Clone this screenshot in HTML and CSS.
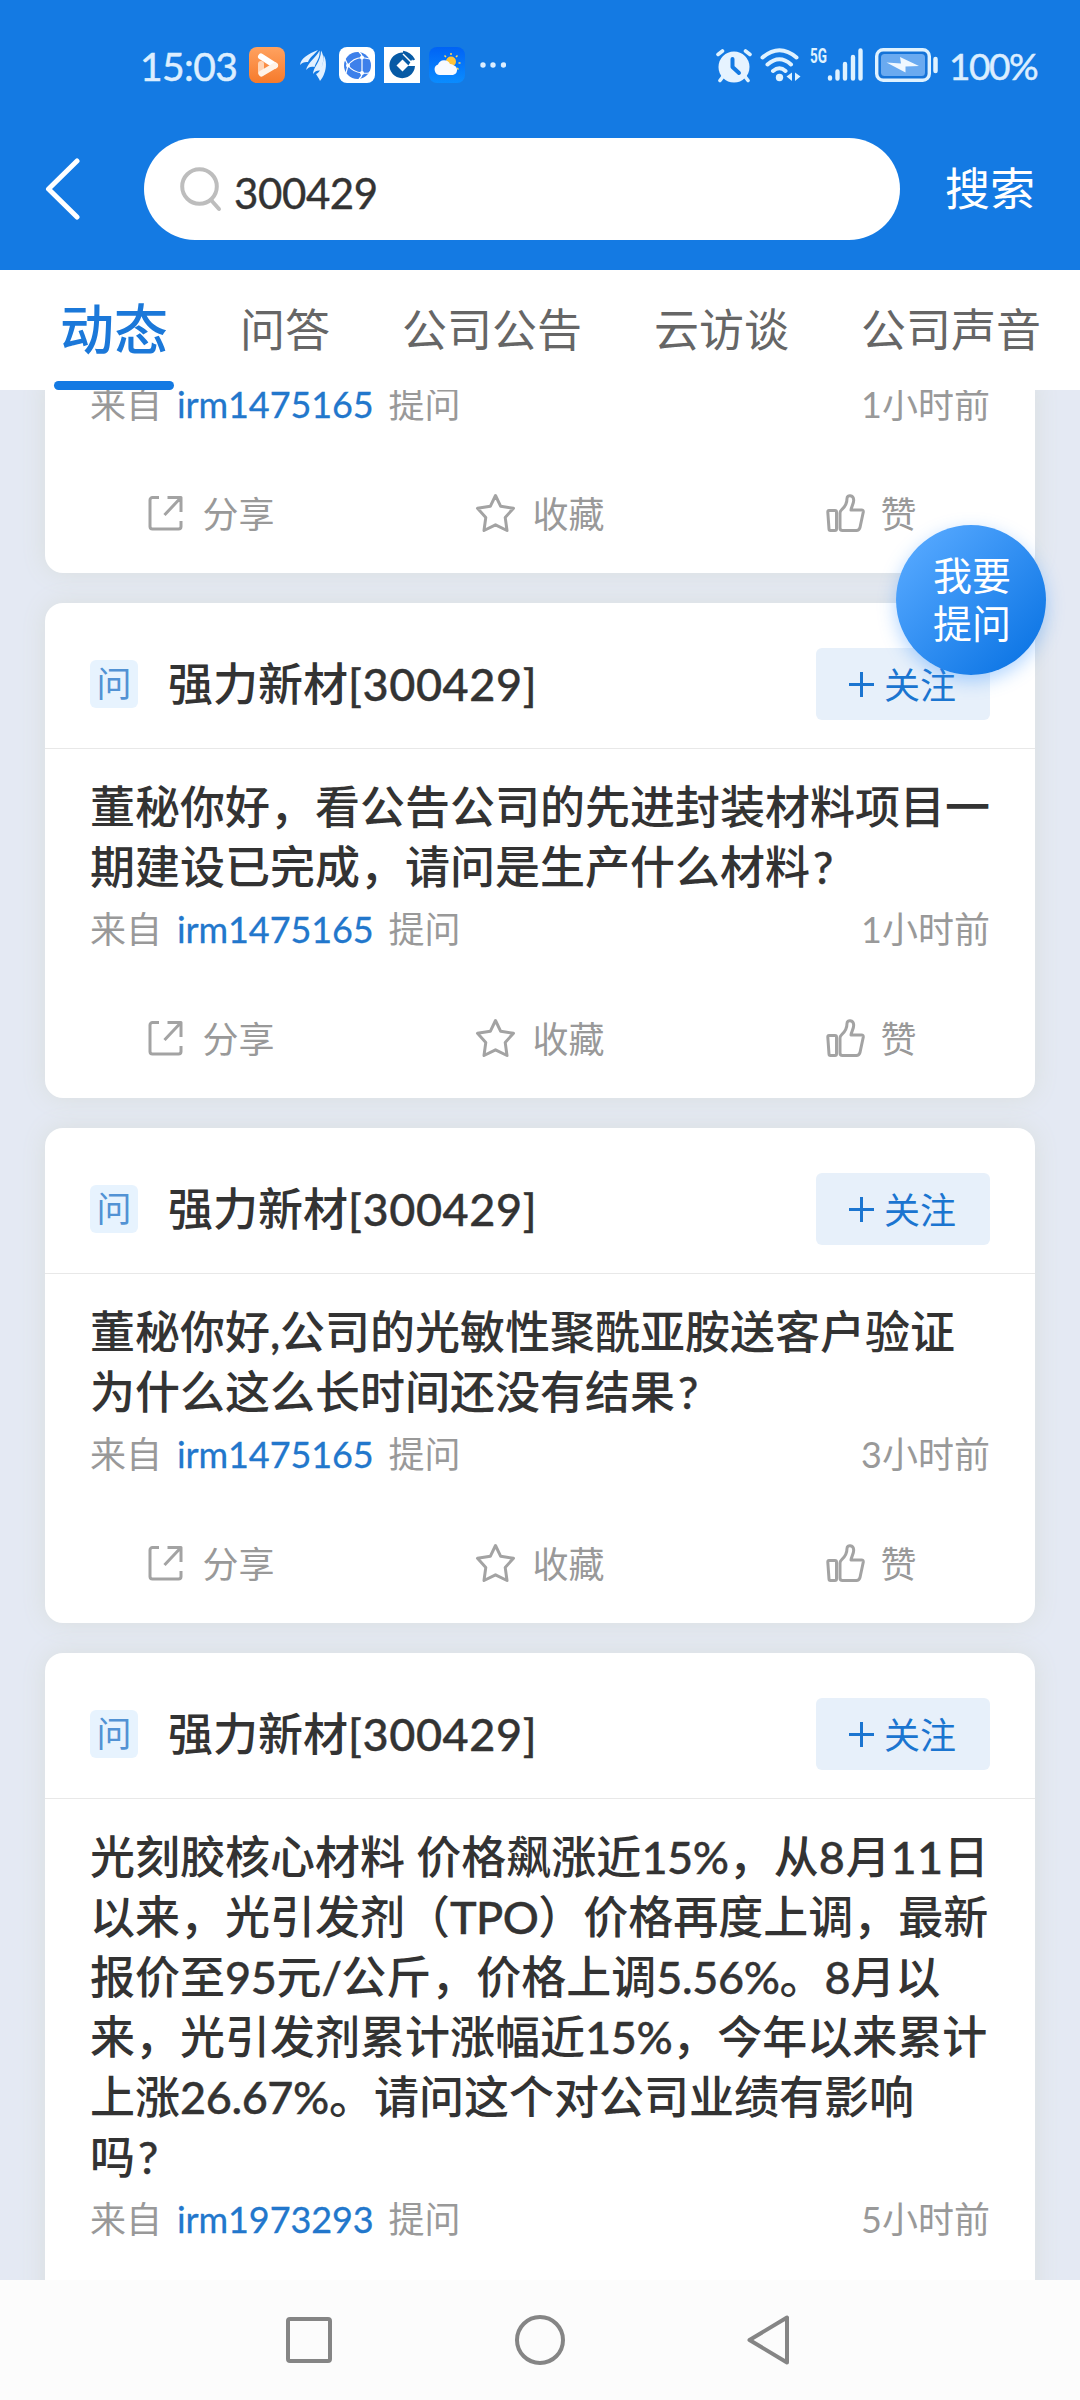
FILE: index.html
```html
<!DOCTYPE html>
<html lang="zh-CN">
<head>
<meta charset="utf-8">
<title>搜索</title>
<link rel="stylesheet" href="styles.css">
</head>
<body>
<svg class="sprite" aria-hidden="true">
  <symbol id="share" viewBox="0 0 42 42"><path d="M14 5.500H7.500a2.500 2.500 0 0 0-2.500 2.500V34.500a2.500 2.500 0 0 0 2.500 2.500H33.500a2.500 2.500 0 0 0 2.500-2.500V29M22.500 5.500H36V20M35.500 6L19.500 23"/></symbol>
  <symbol id="star" viewBox="0 0 42 42"><path d="M20.500 3.500L25.700 14.300 38.500 16.300 30.200 25.400 32 38.500 20.500 32.800 9 38.500 10.800 25.400 2.500 16.300 15.300 14.300Z"/></symbol>
  <symbol id="thumb" viewBox="0 0 42 42"><path d="M6 18.500H12Q13.500 18.500 13.500 20V37Q13.500 38.500 12 38.500H7.500Q6 38.500 6 37L4.800 20Q4.800 18.500 6 18.500ZM17 21Q17 19 18.500 17.800C22.500 14.500 24 11 24 6.500C24 2.500 30.500 2.500 30.700 8C30.800 11.500 28.500 14.500 28 18H38.500Q40.500 18 40.300 20L37 35.500Q36 38.500 33.500 38.500H19.500Q17 38.500 17 36Z"/></symbol>
</svg>
<div class="screen">
  <header class="top">
    <div class="status">
      <span class="clock">15:03</span>
      <svg class="st video" width="36" height="36" viewBox="0 0 36 36"><defs><linearGradient id="o" x2="0" y2="1"><stop stop-color="#ffa260"/><stop offset="1" stop-color="#f67a2b"/></linearGradient></defs><rect width="36" height="36" rx="8" fill="url(#o)"/><path d="M12 9.500L26 18.500" stroke="#fff" stroke-width="6" stroke-linecap="round"/><path d="M12 17V25" stroke="#ffd4b5" stroke-width="6" stroke-linecap="round"/><path d="M12.500 26.500L26 18.500" stroke="#fff3e8" stroke-width="6" stroke-linecap="round"/></svg>
      <svg class="st wing" width="27" height="31" viewBox="0 0 27 31" fill="#e3f1ff"><path d="M0 15C1 8 8 4 18 0C14 5 10 7 8 12C5 11.500 2 12.500 0 15ZM6 20C8 12 16 8 19.500 0.500C20.500 8 16 12 14.500 17C11 16 8.500 17 6 20ZM13 24C13 17 21 12 21 0.500C25 7 23 14 20.500 20.500C17.500 20 15 21 13 24ZM20 31C19 28 17 26 16 24C19 23 24 17 23.500 5C28 12 26 24 20 31Z"/></svg>
      <svg class="st globe" width="36" height="36" viewBox="0 0 36 36"><rect width="36" height="36" rx="8" fill="#fff"/><circle cx="18.500" cy="18.500" r="13.500" fill="#3e80ea"/><g fill="none" stroke="#fff" stroke-width="1.200"><path d="M20 5Q23 7 23 10.500V26Q23 30 20 32M9 18.500Q14 11 23 10.500L31 12M9 18.500Q14 25 23 26T31 24M9 18.500L6 12M9 18.500L7 26"/></g><g fill="#fff"><circle cx="23" cy="10.500" r="2"/><circle cx="9" cy="18.500" r="2"/><circle cx="23" cy="26" r="2"/></g></svg>
      <svg class="st bank" width="36" height="36" viewBox="0 0 36 36"><rect width="36" height="36" fill="#fff"/><path d="M29 11L25 7.500A12.800 12.800 0 1 0 31 19H24" fill="#075aa5"/><path d="M19 5Q26 6 30 13" fill="none" stroke="#075aa5" stroke-width="2.500"/><path d="M19 7L27 15" stroke="#fff" stroke-width="1.500"/><path d="M18.500 12.500L24.500 18.500 18.500 24.500 12.500 18.500Z" fill="#fff"/></svg>
      <svg class="st weather" width="36" height="36" viewBox="0 0 36 36"><defs><linearGradient id="w" x2="0" y2="1"><stop stop-color="#0063f5"/><stop offset="1" stop-color="#0a8cff"/></linearGradient></defs><rect width="36" height="36" rx="8" fill="url(#w)"/><path d="M22 6V8M15.500 8.500L17 10M28.500 8.500L27 10M29.500 16H31.500M28 21L29.500 22.500" stroke="#ffd65a" stroke-width="1.500"/><circle cx="22" cy="14.500" r="5" fill="#ffc43a"/><path d="M12 28A5.500 5.500 0 0 1 9 17.500A6.500 6.500 0 0 1 21 17A5 5 0 0 1 25 18.500A5 5 0 0 1 24 28Z" fill="#f7faff"/></svg>
      <svg class="st dots" width="26" height="8" viewBox="0 0 26 8" fill="#dceeff"><circle cx="3" cy="4" r="2.700"/><circle cx="13" cy="4" r="2.700"/><circle cx="23.500" cy="4" r="2.700"/></svg>
      <svg class="st alarm" width="36" height="35" viewBox="0 0 36 35"><g stroke="#dff2ff" stroke-width="3.600" stroke-linecap="round"><path d="M2 6.500L6.500 3M34 6.500L29.500 3M7 28.500L4 32.500M29 28.500L32 32.500"/></g><circle cx="18" cy="19" r="15.500" fill="#e6f3ff"/><path d="M16.500 11V19L23 25" fill="none" stroke="#147ae3" stroke-width="4" stroke-linecap="round" stroke-linejoin="round"/></svg>
      <svg class="st wifi" width="41" height="34" viewBox="0 0 41 34"><g fill="none" stroke="#dff2ff" stroke-width="4" stroke-linecap="round"><path d="M2.500 9.500Q19.500-5 36.500 9.500M7.500 16.500Q19.500 6 31 16.500M13 23Q19.500 17.500 25.500 23"/></g><circle cx="19.500" cy="29.500" r="3.700" fill="#dff2ff"/><path d="M32 24.500V33L26.500 28.500ZM35 24.500L40.500 28.500 35 33Z" fill="#dff2ff"/></svg>
      <svg class="st signal" width="54" height="34" viewBox="0 0 54 34"><text class="net" x="0" y="15" textLength="17" lengthAdjust="spacingAndGlyphs">5G</text><g stroke="#dff2ff" stroke-width="4.400" stroke-linecap="round"><path d="M20 29.500V30.500M27.500 23.500V30.500M35 16V30.500M43 9V30.500M50.500 2.500V30.500"/></g></svg>
      <svg class="st battery" width="64" height="34" viewBox="0 0 64 34"><rect x="1.700" y="1.700" width="52.600" height="30.600" rx="6.500" fill="#1573d8" stroke="#dff2ff" stroke-width="3.400"/><rect x="6" y="6" width="44" height="22" rx="3.500" fill="#6aaaf0"/><path d="M11.500 14.500L26 15.500 25 9 44 18 30.500 18.500 30.500 24.500Z" fill="#f0f8ff"/><path d="M60.500 11V23" stroke="#dff2ff" stroke-width="4.500" stroke-linecap="round"/></svg>
      <span class="percent">100%</span>
    </div>
    <div class="search-row">
      <svg class="back" width="36" height="62" viewBox="0 0 36 62"><path d="M32 3L3.500 31 32 59" fill="none" stroke="#fff" stroke-width="5" stroke-linecap="round" stroke-linejoin="round"/></svg>
      <div class="search-box">
        <svg width="44" height="46" viewBox="0 0 44 46" fill="none" stroke="#bdbdbd" stroke-width="4"><circle cx="19.500" cy="20.500" r="17.300"/><path d="M31 34L39 43" stroke-linecap="round"/></svg>
        <span>300429</span>
      </div>
      <span class="search-go">搜索</span>
    </div>
  </header>
  <nav class="tabs">
    <span class="tab active">动态</span><span class="tab">问答</span><span class="tab">公司公告</span><span class="tab">云访谈</span><span class="tab">公司声音</span>
  </nav>
  <main class="feed">
    <article class="card first">
      <div class="meta"><span>来自</span><a>irm1475165</a><span>提问</span><time>1小时前</time></div>
      <div class="actions"><span><svg><use href="#share"/></svg>分享</span><span><svg><use href="#star"/></svg>收藏</span><span><svg class="like"><use href="#thumb"/></svg>赞</span></div>
    </article>
    <article class="card">
      <div class="head"><i class="badge">问</i><h2>强力新材<span class="num wide">[300429]</span></h2><button class="follow"><b></b>关注</button></div>
      <p class="question">董秘你好，看公告公司的先进封装材料项目一<br>期建设已完成，请问是生产什么材料<span class="num mark">?</span></p>
      <div class="meta"><span>来自</span><a>irm1475165</a><span>提问</span><time>1小时前</time></div>
      <div class="actions"><span><svg><use href="#share"/></svg>分享</span><span><svg><use href="#star"/></svg>收藏</span><span><svg class="like"><use href="#thumb"/></svg>赞</span></div>
    </article>
    <article class="card">
      <div class="head"><i class="badge">问</i><h2>强力新材<span class="num wide">[300429]</span></h2><button class="follow"><b></b>关注</button></div>
      <p class="question">董秘你好<span class="num">,</span>公司的光敏性聚酰亚胺送客户验证<br>为什么这么长时间还没有结果<span class="num mark">?</span></p>
      <div class="meta"><span>来自</span><a>irm1475165</a><span>提问</span><time>3小时前</time></div>
      <div class="actions"><span><svg><use href="#share"/></svg>分享</span><span><svg><use href="#star"/></svg>收藏</span><span><svg class="like"><use href="#thumb"/></svg>赞</span></div>
    </article>
    <article class="card last">
      <div class="head"><i class="badge">问</i><h2>强力新材<span class="num wide">[300429]</span></h2><button class="follow"><b></b>关注</button></div>
      <p class="question">光刻胶核心材料 价格飙涨近<span class="num">15%</span>，从<span class="num wide">8</span>月<span class="num wide">11</span>日<br>以来，光引发剂（<span class="num tight">TPO</span>）价格再度上调，最新<br>报价至<span class="num">95</span>元<span class="num tight">/</span>公斤，价格上调<span class="num">5.56%</span>。<span class="num">8</span>月以<br>来，光引发剂累计涨幅近<span class="num">15%</span>，今年以来累计<br>上涨<span class="num">26.67%</span>。请问这个对公司业绩有影响<br>吗<span class="num mark">?</span></p>
      <div class="meta"><span>来自</span><a>irm1973293</a><span>提问</span><time>5小时前</time></div>
    </article>
  </main>
  <footer class="sysnav">
    <svg width="50" height="54" viewBox="0 0 50 54"><rect x="4" y="6" width="42" height="42" rx="2"/></svg>
    <svg width="54" height="54" viewBox="0 0 54 54"><circle cx="27" cy="27" r="23"/></svg>
    <svg width="50" height="54" viewBox="0 0 50 54"><path d="M41 4.500V49.500L3.500 27Z"/></svg>
  </footer>
  <button class="ask">我要<br>提问</button>
</div>
</body>
</html>
```
FILE: styles.css
```css
* { box-sizing: border-box; margin: 0; padding: 0; }
body {
  width: 1080px;
  font-family: Lato, "Noto Sans CJK SC", sans-serif;
  color: #333;
}
.sprite { display: none; }
svg { display: block; flex: none; }
button { border: 0; font-family: inherit; }
.screen {
  position: relative;
  display: flex;
  flex-direction: column;
  width: 1080px;
  height: 2400px;
  overflow: hidden;
  background: #e4e9f3;
}

/* status bar and search */
.top { height: 270px; background: #147ae3; flex: none; }
.status { display: flex; align-items: center; height: 130px; padding: 0 44px 0 140px; color: #dceeff; }
.clock { width: 100px; margin-right: 9px; padding-top: 2px; font-size: 39px; line-height: 50px; letter-spacing: -.6px; -webkit-text-stroke: .5px; }
.percent { width: 87px; margin-left: 10px; padding-top: 2px; font-size: 37px; line-height: 50px; letter-spacing: -1.500px; white-space: nowrap; -webkit-text-stroke: .5px; }
.wing { margin: 0 12px 0 15px; }
.bank { margin: 0 9px; }
.dots { margin-left: 15px; }
.alarm { margin-left: auto; }
.wifi { margin: 0 9px 0 8px; }
.signal { margin-right: 11px; overflow: visible; }
.net { font: bold 20px/24px Roboto, sans-serif; fill: #dff2ff; }
.search-row { display: flex; align-items: center; height: 118px; padding-left: 45px; }
.search-box {
  display: flex;
  align-items: center;
  gap: 10px;
  width: 756px;
  height: 102px;
  margin-left: 63px;
  padding-left: 36px;
  border-radius: 51px;
  background: #fff;
  font-size: 42px;
}
.search-box span { padding-top: 8px; letter-spacing: -.4px; -webkit-text-stroke: .4px; }
.search-go { margin-left: 45px; font-size: 45px; line-height: 60px; color: #fff; }

/* tabs */
.tabs {
  position: relative;
  z-index: 1;
  display: flex;
  align-items: center;
  gap: 72px;
  flex: none;
  height: 120px;
  padding-left: 60px;
  background: #fff;
  font-size: 45px;
  line-height: 120px;
  color: #666;
  white-space: nowrap;
}
.active { position: relative; font-size: 54px; font-weight: 500; color: #1b78d9; }
.active::after {
  content: "";
  position: absolute;
  left: -6px;
  right: -6px;
  bottom: 0;
  height: 9px;
  border-radius: 5px;
  background: #147ae3;
}

/* feed */
.feed { flex: 1; min-height: 0; overflow: hidden; padding: 0 45px; display: flex; flex-direction: column; gap: 30px; }
.card { flex: none; border-radius: 18px; background: #fff; box-shadow: 0 0 24px #d9dedd; }
.first { margin-top: -10px; border-radius: 0 0 18px 18px; }
.last { height: 700px; }
.head { display: flex; align-items: center; height: 146px; padding: 17px 45px 0; border-bottom: 1px solid #e8e8e8; }
.badge {
  width: 48px;
  height: 48px;
  border-radius: 6px;
  background: #e7f3fe;
  color: #5292d4;
  font-size: 35px;
  font-style: normal;
  line-height: 46px;
  text-align: center;
}
.head h2 { margin-left: 30px; font-size: 45px; font-weight: 500; line-height: 60px; }
.num { letter-spacing: -.4px; -webkit-text-stroke: .4px; }
.tight { letter-spacing: -.6px; }
.wide { letter-spacing: .6px; }
.mark { margin-left: 3px; }
.follow {
  display: flex;
  align-items: center;
  justify-content: center;
  gap: 10px;
  width: 174px;
  height: 72px;
  margin-left: auto;
  padding-right: 1px;
  padding-bottom: 3px;
  border-radius: 6px;
  background: #e7f0fa;
  color: #1b75d0;
  font-size: 36px;
}
.follow b {
  width: 25px;
  height: 25px;
  margin-top: 3px;
  background: linear-gradient(#1b75d0, #1b75d0) center / 25px 3px no-repeat, linear-gradient(#1b75d0, #1b75d0) center / 3px 25px no-repeat;
}
.question { padding: 28px 0 8px 45px; font-size: 45px; font-weight: 500; line-height: 60px; white-space: nowrap; }
.meta { display: flex; height: 48px; padding: 0 45px; font-size: 36px; line-height: 48px; color: #999; }
.meta a { margin: 0 15px 0 15px; letter-spacing: -.1px; color: #2277cc; -webkit-text-stroke: .3px; }
.meta time { margin-left: auto; }
.actions { display: grid; grid-template-columns: repeat(3, 1fr); height: 118px; margin-top: 27px; color: #999; font-size: 36px; line-height: 48px; }
.actions span { display: flex; align-items: center; justify-content: center; gap: 15px; }
.actions svg { width: 42px; height: 42px; margin-top: -3px; fill: none; stroke: #a3a3a3; stroke-width: 3; stroke-linejoin: round; }

/* floating ask button */
.ask {
  position: absolute;
  left: 896px;
  top: 525px;
  width: 150px;
  height: 150px;
  padding: 0 0 3px 2px;
  border-radius: 50%;
  background: linear-gradient(135deg, #55a8ff 10%, #0b74e4 92%);
  box-shadow: 0 6px 18px rgba(60, 150, 255, .4);
  color: #fff;
  font-size: 39px;
  line-height: 48px;
  z-index: 2;
}

/* system navigation */
.sysnav { display: flex; align-items: center; justify-content: center; gap: 179px; flex: none; height: 120px; background: #fcfcfc; }
.sysnav svg { fill: none; stroke: #858585; stroke-width: 4; stroke-linejoin: round; }
```
